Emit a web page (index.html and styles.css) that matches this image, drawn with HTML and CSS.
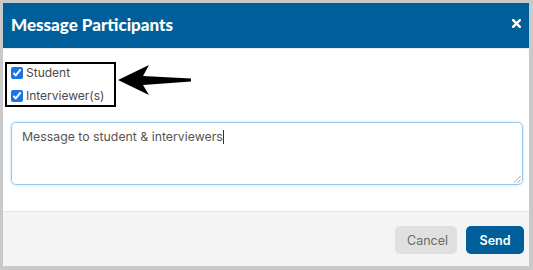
FILE: index.html
```html
<!DOCTYPE html>
<html>
<head>
<meta charset="utf-8">
<link rel="stylesheet" href="styles.css">
</head>
<body>
<div class="frame">
  <div class="header">
    <h1 class="title">Message Participants</h1>
    <svg class="close" width="9" height="9" viewBox="0 0 9 9">
      <path d="M1.2 1.2 L7.8 7.8 M7.8 1.2 L1.2 7.8" stroke="#fff" stroke-width="2.4" stroke-linecap="square"/>
    </svg>
  </div>
  <div class="body">
    <div class="choices-row">
      <div class="choices">
        <label class="choice"><input type="checkbox" checked> Student</label>
        <label class="choice"><input type="checkbox" checked> Interviewer(s)</label>
      </div>
      <svg class="arrow" width="76" height="40" viewBox="0 0 76 40">
        <path d="M1 18 L32 3 L26 14 L74 16.5 L74 19.5 L26 23 L32 33 Z" fill="#000"/>
      </svg>
    </div>
    <div class="message">Message to student &amp; interviewers<span class="caret"></span>
      <svg class="grip" width="8" height="8" viewBox="0 0 8 8">
        <path d="M7.5 1 L1 7.5 M7.5 4.5 L4.5 7.5" stroke="#999" stroke-width="0.9"/>
      </svg>
    </div>
  </div>
  <div class="footer">
    <button class="btn btn-cancel">Cancel</button>
    <button class="btn btn-send">Send</button>
  </div>
</div>
</body>
</html>
```
FILE: styles.css
```css
html, body {
  margin: 0;
  padding: 0;
  background: #fff;
}
.frame {
  box-sizing: border-box;
  width: 533px;
  height: 270px;
  border-style: solid;
  border-color: #c9c9c9;
  border-width: 3px 4px 4px 3px;
  display: flex;
  flex-direction: column;
  font-family: "Inter", "Liberation Sans", sans-serif;
}
.header {
  height: 45px;
  background: #005f9b;
  display: flex;
  align-items: center;
  justify-content: space-between;
  padding: 0 8px 0 8px;
  border-bottom: 1px solid #e6eef5;
}
.title {
  margin: 0;
  color: #fff;
  font-family: "Lato", "Liberation Sans", sans-serif;
  font-weight: 900;
  font-size: 17px;
  padding-bottom: 3px;
}
.close {
  margin-bottom: 5px;
}
.body {
  flex: 1;
  background: #fff;
  padding: 13px 6px 0 2px;
  border-bottom: 1px solid #e4e4e4;
}
.choices-row {
  display: flex;
  align-items: flex-start;
}
.choices {
  box-sizing: border-box;
  width: 111px;
  border: 2px solid #000;
  padding: 0 0 1px 4px;
  display: flex;
  flex-direction: column;
  gap: 6px;
}
.choice {
  display: flex;
  align-items: center;
  font-size: 12px;
  color: #4a4a4a;
  height: 17px;
}
.choice input {
  margin: 0 3px 0 0;
  width: 12px;
  height: 12px;
  accent-color: #1a73e8;
}
.arrow {
  margin-left: 1px;
}
.message {
  position: relative;
  box-sizing: border-box;
  margin: 15px 0 0 6px;
  height: 63px;
  border: 1px solid #9cc7ea;
  border-radius: 5px;
  box-shadow: 0 0 3px rgba(102, 175, 233, 0.45);
  padding: 6px 10px;
  font-size: 12.3px;
  color: #555;
}
.caret {
  display: inline-block;
  width: 1px;
  height: 14px;
  background: #333;
  vertical-align: -3px;
}
.grip {
  position: absolute;
  right: 1px;
  bottom: 1px;
}
.footer {
  height: 54px;
  background: #f4f4f4;
  display: flex;
  align-items: center;
  justify-content: flex-end;
  gap: 9px;
  padding: 0 5px 0 0;
}
.btn {
  height: 28px;
  border: none;
  border-radius: 5px;
  font-family: "Inter", "Liberation Sans", sans-serif;
  font-size: 12.5px;
  padding: 0 12px;
  margin-top: 2px;
}
.btn-cancel {
  background: #e0e0e0;
  color: #6a6a6a;
  width: 62px;
}
.btn-send {
  background: #005f9b;
  color: #fff;
  font-weight: 600;
  width: 58px;
}
```
